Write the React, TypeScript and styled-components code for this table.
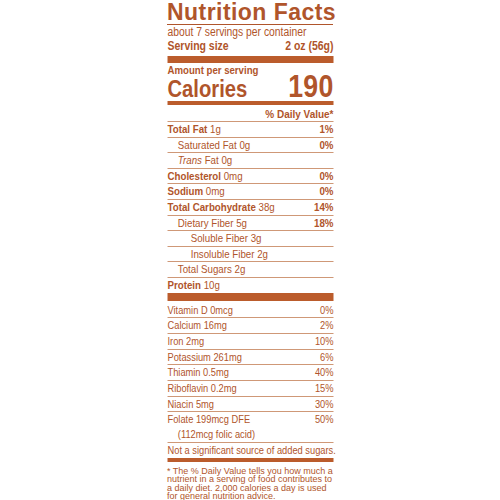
import React from "react";
import styled, { createGlobalStyle } from "styled-components";

const INK = "#b0552b";
const BAR = "#bb5c2c";
const RULE = "#cf9877";

// the label's type is a condensed grotesque; Liberation Sans squeezed horizontally stands in for it
const SQUEEZE = 0.86;
const LABEL_W = 166;

const GlobalStyle = createGlobalStyle`
  html, body {
    margin: 0;
    padding: 0;
    background: #ffffff;
  }
  body {
    font-family: "Liberation Sans", Arial, sans-serif;
    color: ${INK};
  }
`;

type Row = {
  label: string;
  amount?: string;
  dv?: string;
  bold?: boolean;
  italicLead?: string;
  indent?: number;
};

const macros: Row[] = [
  { label: "Total Fat", amount: "1g", dv: "1%", bold: true },
  { label: "Saturated Fat", amount: "0g", dv: "0%", indent: 1 },
  { label: "Fat", italicLead: "Trans", amount: "0g", indent: 1 },
  { label: "Cholesterol", amount: "0mg", dv: "0%", bold: true },
  { label: "Sodium", amount: "0mg", dv: "0%", bold: true },
  { label: "Total Carbohydrate", amount: "38g", dv: "14%", bold: true },
  { label: "Dietary Fiber", amount: "5g", dv: "18%", indent: 1 },
  { label: "Soluble Fiber", amount: "3g", indent: 2 },
  { label: "Insoluble Fiber", amount: "2g", indent: 2 },
  { label: "Total Sugars", amount: "2g", indent: 1 },
  { label: "Protein", amount: "10g", bold: true },
];

const micros = [
  { label: "Vitamin D 0mcg", dv: "0%" },
  { label: "Calcium 16mg", dv: "2%" },
  { label: "Iron 2mg", dv: "10%" },
  { label: "Potassium 261mg", dv: "6%" },
  { label: "Thiamin 0.5mg", dv: "40%" },
  { label: "Riboflavin 0.2mg", dv: "15%" },
  { label: "Niacin 5mg", dv: "30%" },
];

export default function App() {
  return (
    <>
      <GlobalStyle />
      <Label>
        <Title>Nutrition Facts</Title>
        <Condensed>
          <Servings>about 7 servings per container</Servings>
          <ServingSize>
            <span>Serving size</span>
            <span>2 oz (56g)</span>
          </ServingSize>
          <Bar $h={7} $mt={3} />
          <AmountLine>Amount per serving</AmountLine>
          <CaloriesRow>
            <CaloriesWord>Calories</CaloriesWord>
            <CaloriesValue>190</CaloriesValue>
          </CaloriesRow>
          <Bar $h={4} $mt={2} />
          <DailyHead>% Daily Value*</DailyHead>
          {macros.map((row, i) => (
            <NutrientRow key={i}>
              <Name $indent={row.indent || 0}>
                {row.bold ? <b>{row.label}</b> : null}
                {row.italicLead ? <i>{row.italicLead} </i> : null}
                {!row.bold ? row.label : null} {row.amount}
              </Name>
              <Percent>{row.dv}</Percent>
            </NutrientRow>
          ))}
          <Bar $h={8} $mt={0} />
          {micros.map((row, i) => (
            <VitaminRow key={i} $first={i === 0}>
              <span>{row.label}</span>
              <span>{row.dv}</span>
            </VitaminRow>
          ))}
          <VitaminRow>
            <span>
              Folate 199mcg DFE
              <Sub>(112mcg folic acid)</Sub>
            </span>
            <span>50%</span>
          </VitaminRow>
          <VitaminRow>
            <span>Not a significant source of added sugars.</span>
          </VitaminRow>
          <Bar $h={4} $mt={0} />
        </Condensed>
        <Footnote>
          * The % Daily Value tells you how much a nutrient in a serving of food
          contributes to a daily diet. 2,000 calories a day is used for general
          nutrition advice.
        </Footnote>
      </Label>
    </>
  );
}

const Label = styled.div`
  width: ${LABEL_W}px;
  margin: 0 auto;
  display: flex;
  flex-direction: column;
`;

const Title = styled.h1`
  margin: 0;
  font-size: 23px;
  line-height: 24px;
  font-weight: 900;
  letter-spacing: 0.45px;
  white-space: nowrap;
  border-bottom: 1px solid ${INK};
`;

const Condensed = styled.div`
  width: ${LABEL_W / SQUEEZE}px;
  margin-left: ${(LABEL_W - LABEL_W / SQUEEZE) / 2}px;
  transform: scaleX(${SQUEEZE});
  transform-origin: center top;
  display: flex;
  flex-direction: column;
`;

const Servings = styled.div`
  font-size: 12px;
  line-height: 14px;
  white-space: nowrap;
`;

const ServingSize = styled.div`
  display: flex;
  justify-content: space-between;
  font-size: 12.2px;
  line-height: 14px;
  font-weight: 700;
  white-space: nowrap;
`;

const Bar = styled.div<{ $h: number; $mt: number }>`
  height: ${(p) => p.$h}px;
  margin-top: ${(p) => p.$mt}px;
  background: ${BAR};
`;

const AmountLine = styled.div`
  font-size: 11.2px;
  line-height: 13px;
  font-weight: 700;
  padding-top: 1px;
  white-space: nowrap;
`;

const CaloriesRow = styled.div`
  display: flex;
  justify-content: space-between;
  align-items: baseline;
  font-weight: 700;
`;

const CaloriesWord = styled.span`
  font-size: 23.5px;
  line-height: 20px;
`;

const CaloriesValue = styled.span`
  font-size: 31px;
  line-height: 20px;
  letter-spacing: 0.3px;
`;

const DailyHead = styled.div`
  text-align: right;
  font-size: 11.6px;
  line-height: 15px;
  padding-top: 1px;
  font-weight: 700;
  white-space: nowrap;
`;

const NutrientRow = styled.div`
  display: flex;
  justify-content: space-between;
  border-top: 1px solid ${RULE};
  font-size: 11.3px;
  line-height: 14.6px;
  white-space: nowrap;
`;

const Name = styled.span<{ $indent: number }>`
  padding-left: ${(p) => [0, 12, 27][p.$indent]}px;
`;

const Percent = styled.span`
  font-weight: 700;
`;

const VitaminRow = styled.div<{ $first?: boolean }>`
  display: flex;
  justify-content: space-between;
  border-top: ${(p) => (p.$first ? "none" : `1px solid ${RULE}`)};
  padding-top: ${(p) => (p.$first ? "2px" : "0")};
  font-size: 10.8px;
  line-height: 14.7px;
  white-space: nowrap;
`;

const Sub = styled.span`
  display: block;
  padding-left: 12px;
`;

const Footnote = styled.p`
  margin: 5px 0 0;
  font-size: 9px;
  line-height: 8.5px;
`;
